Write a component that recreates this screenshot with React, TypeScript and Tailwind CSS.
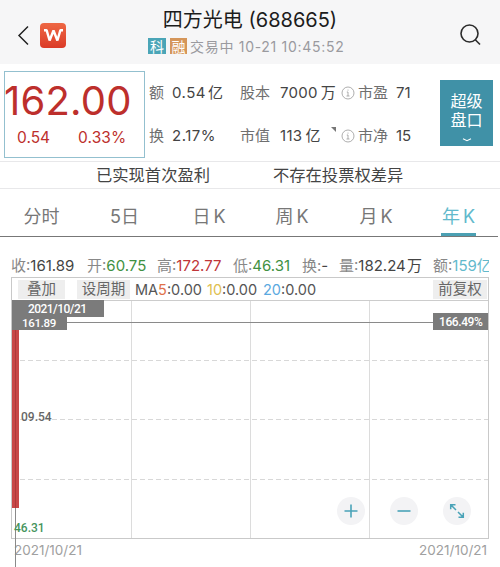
import type { ReactNode } from "react";
import clsx from "clsx";

const tabs = [
  { label: "分时", className: "ml-[23px] w-[37px]" },
  { label: "5日", className: "ml-[50px] w-[29px]" },
  { label: "日 K", className: "ml-[54px] w-[32px]" },
  { label: "周 K", className: "ml-[50px] w-[34px]" },
  { label: "月 K", className: "ml-[51px] w-[32px]" },
  { label: "年 K", className: "ml-[49px] w-[35px]", active: true },
];

const stats = [
  { label: "收", value: "161.89", className: "w-[76px]", color: "text-[#444]" },
  { label: "开", value: "60.75", className: "w-[70px]", color: "text-[#3f9142]" },
  { label: "高", value: "172.77", className: "w-[76px]", color: "text-[#c03538]" },
  { label: "低", value: "46.31", className: "w-[69px]", color: "text-[#3f9142]" },
  { label: "换", value: "-", className: "w-[37px]", color: "text-[#444]" },
  { label: "量", value: "182.24 万", className: "w-[94px] [word-spacing:-3px]", color: "text-[#444]" },
  { label: "额", value: "159亿", className: "w-[56px]", color: "text-[#62b9cc]" },
];

function InfoIcon() {
  return (
    <svg width="14" height="14" viewBox="0 0 14 14" fill="none" stroke="#999" strokeWidth="0.8">
      <circle cx="7" cy="7" r="6" />
      <path d="M7 3.6v1M5.8 6h1.2v4M5.5 10h3" />
    </svg>
  );
}

function Header() {
  return (
    <header className="flex h-16 bg-[#f6f6f7]">
      <div className="flex w-[148px] items-start pt-[23px] pl-[17px]">
        <svg className="mt-[2px]" width="13" height="21" viewBox="0 0 13 21" fill="none" stroke="#222" strokeWidth="1.5">
          <path d="M11 1.5L2 10.5l9 9" />
        </svg>
        <div className="ml-[10px] flex h-[25px] w-[26px] items-center justify-center rounded-[4px] bg-linear-to-b from-[#ee6744] to-[#db3a27]">
          <svg width="19" height="13" viewBox="0 0 19 13" fill="none" stroke="#fff" strokeWidth="2.4" strokeLinejoin="bevel">
            <path d="M0 1.2h2.600l3 10.300L9.500 1.500l3.900 10L16.400 1.200H19" />
          </svg>
        </div>
      </div>
      <div className="flex w-[204px] flex-col items-center pt-[7px]">
        <h1 className="text-[20px] leading-[26px] whitespace-nowrap text-[#1c1c1c]">四方光电 (688665)</h1>
        <div className="mt-[5px] flex h-4 w-full items-center">
          <span className="flex h-4 w-[18px] items-center justify-center bg-[#4aa5b7] text-[14px] text-white">科</span>
          <span className="ml-[4px] flex h-4 w-[17px] items-center justify-center bg-[#d5965a] text-[14px] text-white">融</span>
          <span className="ml-[3px] text-[14px] tracking-[0.7px] whitespace-nowrap text-[#9a9a9f]">交易中 10-21 10:45:52</span>
        </div>
      </div>
      <svg className="mt-[24px] ml-[107px]" width="23" height="22" viewBox="0 0 23 22" fill="none" stroke="#2b2b2b" strokeWidth="1.6">
        <circle cx="10.5" cy="9.5" r="8.5" />
        <path d="M16.3 15.8L21 20.5" />
      </svg>
    </header>
  );
}

function Field({ label, children, className }: { label: ReactNode; children: ReactNode; className: string }) {
  return (
    <div className={clsx("flex items-center text-[15px] whitespace-nowrap text-[#444]", className)}>
      <span className="mr-[8px] flex items-center text-[#6f6f6f]">{label}</span>
      {children}
    </div>
  );
}

function Quote() {
  return (
    <section className="flex h-[97px]">
      <div className="mt-[7px] ml-[4px] h-[87px] w-[141px] border border-[#93c0cf] text-[#bd2f2c]">
        <div className="-ml-px h-[55px] text-[40px] leading-[57px] tracking-[0.2px]">162.00</div>
        <div className="flex pl-[12px] text-[15.5px] leading-[22px]">
          <span className="w-[61px]">0.54</span>
          <span className="tracking-[0.1px]">0.33%</span>
        </div>
      </div>
      <div className="flex w-[295px] flex-col gap-[21px] pt-[18px] pl-[4px]">
        <div className="flex h-[22px]">
          <Field label="额" className="w-[91px]">
            <span className="tracking-[0.5px]">0.54</span>
            <span className="ml-[2px]">亿</span>
          </Field>
          <Field label="股本" className="w-[101px]">
            <span className="ml-[2px] tracking-[0.3px]">7000</span>
            <span className="ml-[3px]">万</span>
          </Field>
          <Field label={<><InfoIcon /><span className="ml-[3px]">市盈</span></>} className="w-[72px]">71</Field>
        </div>
        <div className="flex h-[22px]">
          <Field label="换" className="w-[91px]">
            <span className="tracking-[0.5px]">2.17%</span>
          </Field>
          <Field label="市值" className="w-[101px]">
            <span className="ml-[2px] tracking-[0.3px]">113</span>
            <span className="ml-[3px]">亿</span>
            <svg className="mb-[14px] ml-[11px]" width="5" height="5" viewBox="0 0 5 5">
              <path d="M0 0h5v5z" fill="#777" />
            </svg>
          </Field>
          <Field label={<><InfoIcon /><span className="ml-[3px]">市净</span></>} className="w-[72px]">15</Field>
        </div>
      </div>
      <button className="mt-[16px] flex h-[66px] w-[53px] flex-col items-center bg-[#4091a7] pt-[12px] text-[16px] leading-[19px] text-white">
        <span>超级</span>
        <span>盘口</span>
        <svg className="mt-[8px]" width="10" height="4" viewBox="0 0 10 4" fill="none" stroke="#fff" strokeWidth="1.1">
          <path d="M1 .7l4 2 4-2" />
        </svg>
      </button>
    </section>
  );
}

function Tabs() {
  return (
    <nav className="flex h-[48px] w-[498px] border-b border-[#777] text-[18px] text-[#777] [word-spacing:-2px]">
      {tabs.map((tab) => (
        <div key={tab.label} className={clsx("flex h-[47px] shrink-0 flex-col items-center whitespace-nowrap", tab.className)}>
          <span className={clsx("h-[44px] pt-[15px] leading-[26px]", tab.active && "text-[#62b9cc]")}>{tab.label}</span>
          {tab.active && <span className="h-[3px] w-full bg-[#4ba0b3]" />}
        </div>
      ))}
    </nav>
  );
}

function RoundButton({ children }: { children: ReactNode }) {
  return (
    <button className="flex size-7 items-center justify-center rounded-full bg-[#f3f3f5]">
      <svg width="16" height="16" viewBox="0 0 16 16" fill="none" stroke="#4aa3b8" strokeWidth="1.6">
        {children}
      </svg>
    </button>
  );
}

function Chart() {
  return (
    <div className="relative h-[237px] font-['Roboto',sans-serif] text-[12px] font-medium">
      <svg className="block overflow-visible" width="476" height="237" viewBox="0 0 476 237" fill="none">
        <path d="M119.5 0v237M238.5 0v237M357.5 0v237" stroke="#dcdcdc" />
        <path d="M0 59.5h476M0 118.5h476M0 178.5h476" stroke="#d8d8d8" strokeDasharray="5 3" />
        <path d="M0 21.5h476" stroke="#8a8a8a" />
        <path d="M3.5 20v246" stroke="#8a8a8a" />
        <path d="M0 28h7v179H0z" fill="#c84848" />
        <path d="M3.5 28v179" stroke="#ad3b3b" />
      </svg>
      <div className="absolute top-[-1px] left-0 h-[17px] w-[92px] bg-[#7b7b7b] pl-[16px] leading-[18px] tracking-[-0.55px] text-white">2021/10/21</div>
      <div className="absolute top-[16px] left-0 h-[13px] w-[55px] bg-[#7b7b7b] pl-[10px] text-[11.5px] leading-[12px] tracking-[-0.3px] text-white">161.89</div>
      <div className="absolute top-[12px] right-0 h-[17px] w-[55px] bg-[#7b7b7b] pl-[6px] leading-[18px] tracking-[-0.4px] text-white">166.49%</div>
      <div className="absolute top-[108px] left-[9px] leading-[16px] text-[#666]">09.54</div>
      <div className="absolute top-[219px] left-[2px] leading-[16px] text-[#46945d]">46.31</div>
      <div className="absolute top-[196px] left-[325px] flex gap-[25px]">
        <RoundButton><path d="M8 1.500v13M1.500 8h13" /></RoundButton>
        <RoundButton><path d="M1.500 8h13" /></RoundButton>
        <RoundButton>
          <path d="M1.700 6.200V1.700h4.800M2 2l5 5M14.300 9.800v4.500H9.500M14 14L9 9" strokeWidth="1.500" />
        </RoundButton>
      </div>
    </div>
  );
}

export default function App() {
  return (
    <div className="h-[567px] w-[500px] overflow-hidden bg-white font-['Inter','Noto_Sans_CJK_SC',sans-serif]">
      <Header />
      <Quote />
      <div className="flex h-7 items-center border-y border-[#e8e8ea] text-[16.3px] whitespace-nowrap text-[#444]">
        <span className="ml-[96px] w-[177px]">已实现首次盈利</span>
        <span>不存在投票权差异</span>
      </div>
      <Tabs />
      <div className="mt-[18px] ml-[11px] flex h-[22px] w-[478px] items-center overflow-hidden text-[15px]">
        {stats.map((s) => (
          <div key={s.label} className={clsx("shrink-0 whitespace-nowrap", s.className)}>
            <span className="text-[#888]">{s.label}:</span>
            <span className={s.color}>{s.value}</span>
          </div>
        ))}
      </div>
      <div className="ml-[11px] w-[478px] border border-[#c9c9c9]">
        <div className="flex h-[23px] items-center border-b border-[#ccc] text-[14.5px] whitespace-nowrap text-[#555]">
          <span className="ml-[6px] flex h-[19px] w-[47px] items-center justify-center bg-[#eee] text-[#666]">叠加</span>
          <span className="ml-[12px] flex h-[19px] w-[53px] items-center justify-center bg-[#eee] text-[#666]">设周期</span>
          <span className="ml-[5px] pt-[2px] w-[72px]">MA<b className="font-normal text-[#e0714a]">5</b>:0.00</span>
          <span className="w-[56px] pt-[2px]"><b className="font-normal text-[#e0c050]">10</b>:0.00</span>
          <span className="pt-[2px]"><b className="font-normal text-[#5aa9e0]">20</b>:0.00</span>
          <span className="mr-px ml-auto flex h-[19px] w-[54px] items-center justify-center bg-[#eee] text-[#666]">前复权</span>
        </div>
        <Chart />
      </div>
      <div className="flex justify-between pt-[2px] pr-[13px] pl-[14px] text-[13.5px] leading-[18px] text-[#a0a0a0]">
        <span>2021/10/21</span>
        <span>2021/10/21</span>
      </div>
    </div>
  );
}
